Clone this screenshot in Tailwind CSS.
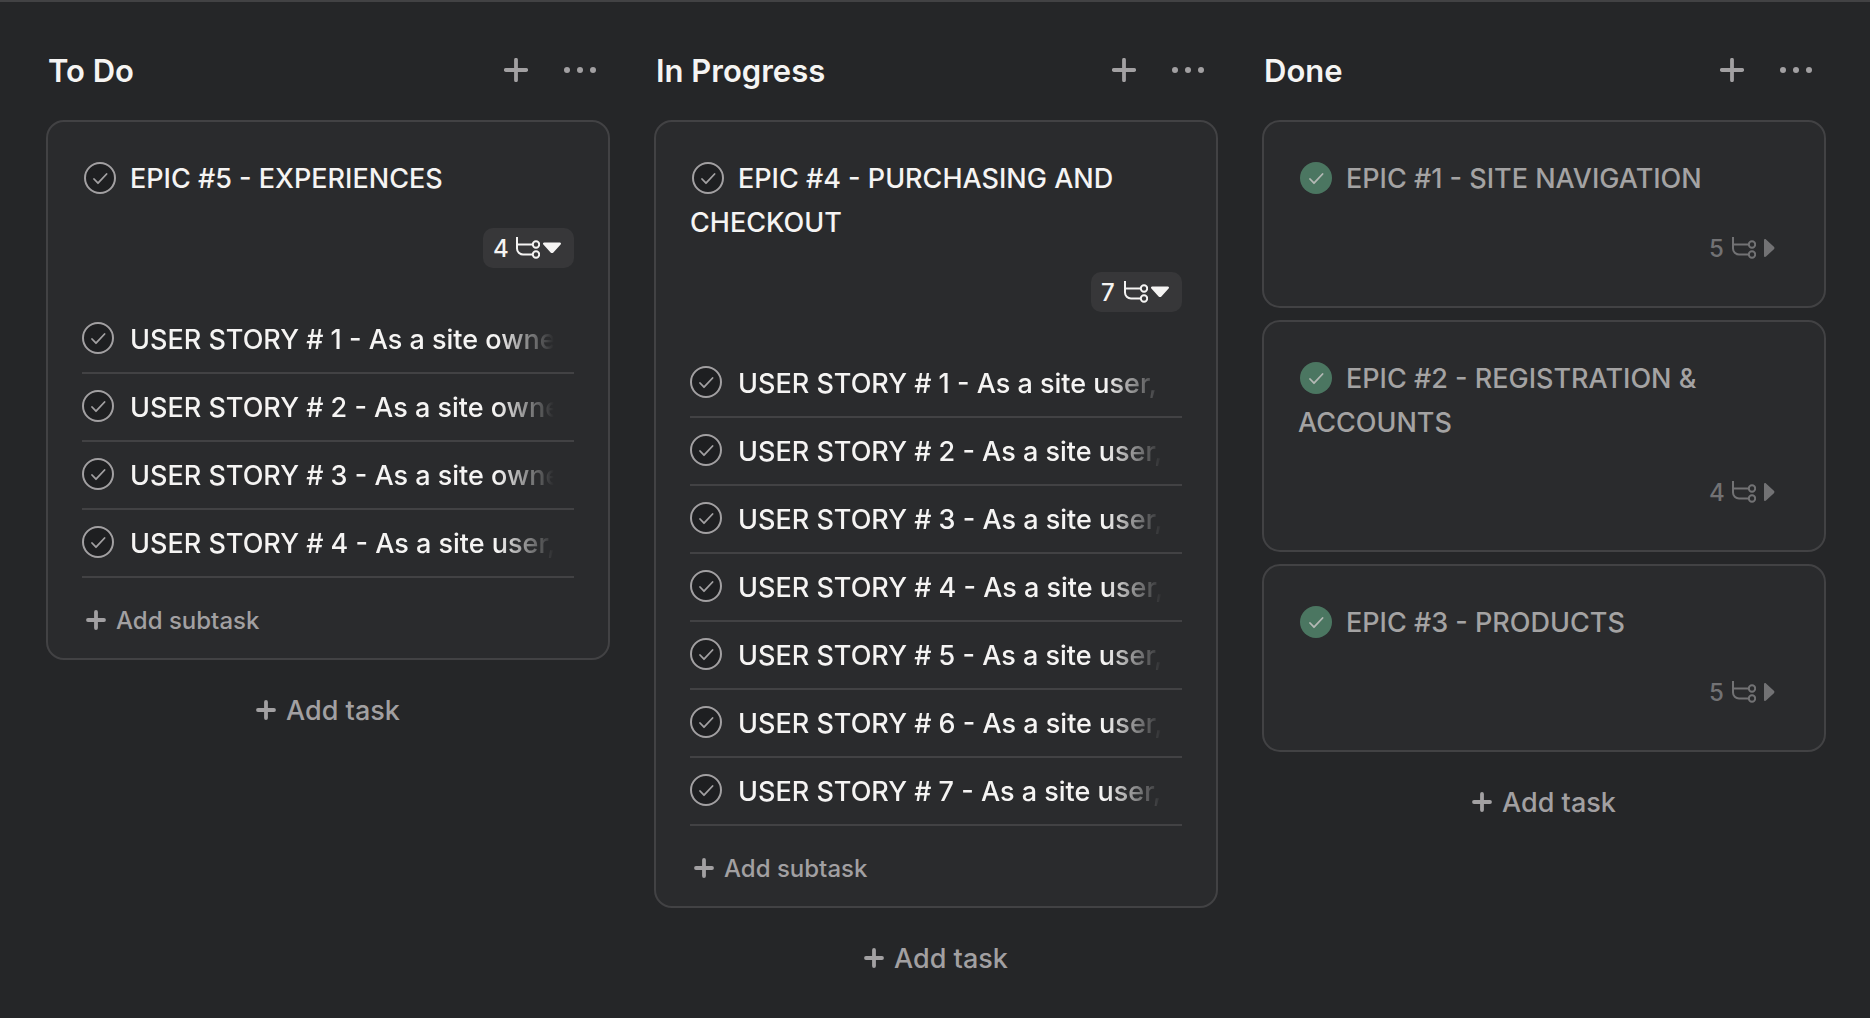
<!DOCTYPE html>
<html lang="en">
<head>
<meta charset="utf-8">
<meta name="viewport" content="width=device-width, initial-scale=1">
<title>Board</title>
<script src="https://cdn.jsdelivr.net/npm/@tailwindcss/browser@4"></script>
</head>
<body class="min-h-screen border-t-2 border-[#424244] bg-[#252628] font-['Inter',sans-serif] font-[450] text-[#f5f4f3]">
<svg class="hidden" aria-hidden="true">
  <symbol id="check" viewBox="0 0 32 32"><path d="M10 17l4 4.200 8.600-9.200" fill="none" stroke="currentColor" stroke-width="1.8" stroke-linecap="round" stroke-linejoin="round"/></symbol>
  <symbol id="plus" viewBox="0 0 24 24"><path d="M12 1.800v20.400M1.800 12h20.400" fill="none" stroke="currentColor" stroke-width="3.8" stroke-linecap="round"/></symbol>
  <symbol id="plus-bold" viewBox="0 0 20 20"><path d="M10 2v16M2 10h16" fill="none" stroke="currentColor" stroke-width="3.8" stroke-linecap="round"/></symbol>
  <symbol id="dots" viewBox="0 0 32 8"><circle cx="3" cy="4" r="3"/><circle cx="16" cy="4" r="3"/><circle cx="29" cy="4" r="3"/></symbol>
  <symbol id="branch" viewBox="0 0 24 22"><g fill="none" stroke="currentColor" stroke-width="2"><path d="M1 0v11.500a6 6 0 0 0 6 6H16.500M1 7.500H16.500"/><circle cx="20" cy="7.500" r="3.200"/><circle cx="20" cy="17.500" r="3.200"/></g></symbol>
  <symbol id="down" viewBox="0 0 20 20"><path d="M2.200 4.500h15.600c1.200 0 1.600 1.300.8 2.100l-7.200 7.800c-.8.800-2 .8-2.800 0L1.400 6.600C.6 5.800 1 4.500 2.200 4.500z"/></symbol>
  <symbol id="right" viewBox="0 0 20 20"><path d="M6 2.300v15.400c0 1.200 1.200 1.600 2 .8l7.900-7.300c.7-.7.7-1.700 0-2.400L8 1.500c-.8-.8-2-.4-2 .8z"/></symbol>
</svg>

<main class="grid grid-cols-3 gap-11 pr-11 pl-[46px]">

  <section>
    <header class="flex h-[118px] items-center pt-[18px] pr-3.5 pb-0 pl-0.5">
      <h2 class="flex-1 pt-0.5 text-[31px] leading-10 font-semibold">To Do</h2>
      <button class="mr-9 text-[#a2a0a2]" aria-label="Add task to To Do"><svg class="size-6"><use href="#plus"/></svg></button>
      <button class="text-[#a2a0a2]" aria-label="More actions"><svg class="h-2 w-8 fill-current"><use href="#dots"/></svg></button>
    </header>
    <article class="rounded-[18px] border-2 border-[#424244] bg-[#2a2b2d] px-[34px] pt-[35px]">
      <h3 class="text-[27px] leading-11"><label class="mt-[5px] mr-3.5 ml-0.5 inline-grid size-8 align-top text-[#a2a0a2]"><input type="checkbox" aria-label="Complete EPIC #5" class="col-start-1 row-start-1 size-8 appearance-none rounded-full border-2 border-[#a2a0a2] bg-[#1e1f21]"><svg class="pointer-events-none col-start-1 row-start-1 size-8"><use href="#check"/></svg></label>EPIC #5 - EXPERIENCES</h3>
      <div class="mt-[27px] mb-[38px] flex justify-end">
        <button class="flex h-10 w-[91px] items-center rounded-[10px] bg-[#373739] pl-2.5 text-2xl" aria-label="4 subtasks"><span class="w-[23px] pt-0.5 text-left">4</span><svg class="mr-0.5 h-[22px] w-6"><use href="#branch"/></svg><svg class="size-5 fill-current"><use href="#down"/></svg></button>
      </div>
      <ul class="text-[27px]">
        <li class="flex h-17 items-center gap-4 border-b-2 border-[#424244] pb-0.5"><label class="inline-grid size-8 shrink-0 text-[#a2a0a2]"><input type="checkbox" aria-label="Complete user story 1" class="col-start-1 row-start-1 size-8 appearance-none rounded-full border-2 border-[#a2a0a2] bg-[#1e1f21]"><svg class="pointer-events-none col-start-1 row-start-1 size-8"><use href="#check"/></svg></label><span class="mr-5 min-w-0 flex-1 overflow-hidden mask-r-from-[calc(100%-56px)] pt-1 whitespace-nowrap">USER STORY # 1 - As a site owner</span></li>
        <li class="flex h-17 items-center gap-4 border-b-2 border-[#424244] pb-0.5"><label class="inline-grid size-8 shrink-0 text-[#a2a0a2]"><input type="checkbox" aria-label="Complete user story 2" class="col-start-1 row-start-1 size-8 appearance-none rounded-full border-2 border-[#a2a0a2] bg-[#1e1f21]"><svg class="pointer-events-none col-start-1 row-start-1 size-8"><use href="#check"/></svg></label><span class="mr-5 min-w-0 flex-1 overflow-hidden mask-r-from-[calc(100%-56px)] pt-1 whitespace-nowrap">USER STORY # 2 - As a site owner</span></li>
        <li class="flex h-17 items-center gap-4 border-b-2 border-[#424244] pb-0.5"><label class="inline-grid size-8 shrink-0 text-[#a2a0a2]"><input type="checkbox" aria-label="Complete user story 3" class="col-start-1 row-start-1 size-8 appearance-none rounded-full border-2 border-[#a2a0a2] bg-[#1e1f21]"><svg class="pointer-events-none col-start-1 row-start-1 size-8"><use href="#check"/></svg></label><span class="mr-5 min-w-0 flex-1 overflow-hidden mask-r-from-[calc(100%-56px)] pt-1 whitespace-nowrap">USER STORY # 3 - As a site owner</span></li>
        <li class="flex h-17 items-center gap-4 border-b-2 border-[#424244] pb-0.5"><label class="inline-grid size-8 shrink-0 text-[#a2a0a2]"><input type="checkbox" aria-label="Complete user story 4" class="col-start-1 row-start-1 size-8 appearance-none rounded-full border-2 border-[#a2a0a2] bg-[#1e1f21]"><svg class="pointer-events-none col-start-1 row-start-1 size-8"><use href="#check"/></svg></label><span class="mr-5 min-w-0 flex-1 overflow-hidden mask-r-from-[calc(100%-56px)] pt-1 whitespace-nowrap">USER STORY # 4 - As a site user,</span></li>
      </ul>
      <button class="flex h-20 items-center gap-2.5 pt-1 pl-1 text-2xl font-[550] text-[#a2a0a2]"><svg class="size-5"><use href="#plus-bold"/></svg><span class="pt-0.5">Add subtask</span></button>
    </article>
    <button class="mt-5 flex h-15 w-full items-center justify-center gap-2.5 text-[27px] font-[550] text-[#a2a0a2]"><svg class="size-5"><use href="#plus-bold"/></svg><span class="pt-0.5">Add task</span></button>
  </section>

  <section>
    <header class="flex h-[118px] items-center pt-[18px] pr-3.5 pb-0 pl-0.5">
      <h2 class="flex-1 pt-0.5 text-[31px] leading-10 font-semibold">In Progress</h2>
      <button class="mr-9 text-[#a2a0a2]" aria-label="Add task to In Progress"><svg class="size-6"><use href="#plus"/></svg></button>
      <button class="text-[#a2a0a2]" aria-label="More actions"><svg class="h-2 w-8 fill-current"><use href="#dots"/></svg></button>
    </header>
    <article class="rounded-[18px] border-2 border-[#424244] bg-[#2a2b2d] px-[34px] pt-[35px]">
      <h3 class="text-[27px] leading-11"><label class="mt-[5px] mr-3.5 ml-0.5 inline-grid size-8 align-top text-[#a2a0a2]"><input type="checkbox" aria-label="Complete EPIC #4" class="col-start-1 row-start-1 size-8 appearance-none rounded-full border-2 border-[#a2a0a2] bg-[#1e1f21]"><svg class="pointer-events-none col-start-1 row-start-1 size-8"><use href="#check"/></svg></label>EPIC #4 - PURCHASING AND CHECKOUT</h3>
      <div class="mt-[27px] mb-[38px] flex justify-end">
        <button class="flex h-10 w-[91px] items-center rounded-[10px] bg-[#373739] pl-2.5 text-2xl" aria-label="7 subtasks"><span class="w-[23px] pt-0.5 text-left">7</span><svg class="mr-0.5 h-[22px] w-6"><use href="#branch"/></svg><svg class="size-5 fill-current"><use href="#down"/></svg></button>
      </div>
      <ul class="text-[27px]">
        <li class="flex h-17 items-center gap-4 border-b-2 border-[#424244] pb-0.5"><label class="inline-grid size-8 shrink-0 text-[#a2a0a2]"><input type="checkbox" aria-label="Complete user story 1" class="col-start-1 row-start-1 size-8 appearance-none rounded-full border-2 border-[#a2a0a2] bg-[#1e1f21]"><svg class="pointer-events-none col-start-1 row-start-1 size-8"><use href="#check"/></svg></label><span class="mr-5 min-w-0 flex-1 overflow-hidden mask-r-from-[calc(100%-56px)] pt-1 whitespace-nowrap">USER STORY # 1 - As a site user,</span></li>
        <li class="flex h-17 items-center gap-4 border-b-2 border-[#424244] pb-0.5"><label class="inline-grid size-8 shrink-0 text-[#a2a0a2]"><input type="checkbox" aria-label="Complete user story 2" class="col-start-1 row-start-1 size-8 appearance-none rounded-full border-2 border-[#a2a0a2] bg-[#1e1f21]"><svg class="pointer-events-none col-start-1 row-start-1 size-8"><use href="#check"/></svg></label><span class="mr-5 min-w-0 flex-1 overflow-hidden mask-r-from-[calc(100%-56px)] pt-1 whitespace-nowrap">USER STORY # 2 - As a site user,</span></li>
        <li class="flex h-17 items-center gap-4 border-b-2 border-[#424244] pb-0.5"><label class="inline-grid size-8 shrink-0 text-[#a2a0a2]"><input type="checkbox" aria-label="Complete user story 3" class="col-start-1 row-start-1 size-8 appearance-none rounded-full border-2 border-[#a2a0a2] bg-[#1e1f21]"><svg class="pointer-events-none col-start-1 row-start-1 size-8"><use href="#check"/></svg></label><span class="mr-5 min-w-0 flex-1 overflow-hidden mask-r-from-[calc(100%-56px)] pt-1 whitespace-nowrap">USER STORY # 3 - As a site user,</span></li>
        <li class="flex h-17 items-center gap-4 border-b-2 border-[#424244] pb-0.5"><label class="inline-grid size-8 shrink-0 text-[#a2a0a2]"><input type="checkbox" aria-label="Complete user story 4" class="col-start-1 row-start-1 size-8 appearance-none rounded-full border-2 border-[#a2a0a2] bg-[#1e1f21]"><svg class="pointer-events-none col-start-1 row-start-1 size-8"><use href="#check"/></svg></label><span class="mr-5 min-w-0 flex-1 overflow-hidden mask-r-from-[calc(100%-56px)] pt-1 whitespace-nowrap">USER STORY # 4 - As a site user,</span></li>
        <li class="flex h-17 items-center gap-4 border-b-2 border-[#424244] pb-0.5"><label class="inline-grid size-8 shrink-0 text-[#a2a0a2]"><input type="checkbox" aria-label="Complete user story 5" class="col-start-1 row-start-1 size-8 appearance-none rounded-full border-2 border-[#a2a0a2] bg-[#1e1f21]"><svg class="pointer-events-none col-start-1 row-start-1 size-8"><use href="#check"/></svg></label><span class="mr-5 min-w-0 flex-1 overflow-hidden mask-r-from-[calc(100%-56px)] pt-1 whitespace-nowrap">USER STORY # 5 - As a site user,</span></li>
        <li class="flex h-17 items-center gap-4 border-b-2 border-[#424244] pb-0.5"><label class="inline-grid size-8 shrink-0 text-[#a2a0a2]"><input type="checkbox" aria-label="Complete user story 6" class="col-start-1 row-start-1 size-8 appearance-none rounded-full border-2 border-[#a2a0a2] bg-[#1e1f21]"><svg class="pointer-events-none col-start-1 row-start-1 size-8"><use href="#check"/></svg></label><span class="mr-5 min-w-0 flex-1 overflow-hidden mask-r-from-[calc(100%-56px)] pt-1 whitespace-nowrap">USER STORY # 6 - As a site user,</span></li>
        <li class="flex h-17 items-center gap-4 border-b-2 border-[#424244] pb-0.5"><label class="inline-grid size-8 shrink-0 text-[#a2a0a2]"><input type="checkbox" aria-label="Complete user story 7" class="col-start-1 row-start-1 size-8 appearance-none rounded-full border-2 border-[#a2a0a2] bg-[#1e1f21]"><svg class="pointer-events-none col-start-1 row-start-1 size-8"><use href="#check"/></svg></label><span class="mr-5 min-w-0 flex-1 overflow-hidden mask-r-from-[calc(100%-56px)] pt-1 whitespace-nowrap">USER STORY # 7 - As a site user,</span></li>
      </ul>
      <button class="flex h-20 items-center gap-2.5 pt-1 pl-1 text-2xl font-[550] text-[#a2a0a2]"><svg class="size-5"><use href="#plus-bold"/></svg><span class="pt-0.5">Add subtask</span></button>
    </article>
    <button class="mt-5 flex h-15 w-full items-center justify-center gap-2.5 text-[27px] font-[550] text-[#a2a0a2]"><svg class="size-5"><use href="#plus-bold"/></svg><span class="pt-0.5">Add task</span></button>
  </section>

  <section>
    <header class="flex h-[118px] items-center pt-[18px] pr-3.5 pb-0 pl-0.5">
      <h2 class="flex-1 pt-0.5 text-[31px] leading-10 font-semibold">Done</h2>
      <button class="mr-9 text-[#a2a0a2]" aria-label="Add task to Done"><svg class="size-6"><use href="#plus"/></svg></button>
      <button class="text-[#a2a0a2]" aria-label="More actions"><svg class="h-2 w-8 fill-current"><use href="#dots"/></svg></button>
    </header>
    <div class="flex flex-col gap-3">
      <article class="rounded-[18px] border-2 border-[#424244] bg-[#2a2b2d] px-[34px] pt-[35px]">
        <h3 class="text-[27px] leading-11 text-[#a4a3a3]"><label class="mt-[5px] mr-3.5 ml-0.5 inline-grid size-8 align-top text-[#b4b9b5]"><input type="checkbox" checked aria-label="EPIC #1 completed" class="col-start-1 row-start-1 size-8 appearance-none rounded-full bg-[#4b7661]"><svg class="pointer-events-none col-start-1 row-start-1 size-8"><use href="#check"/></svg></label>EPIC #1 - SITE NAVIGATION</h3>
        <div class="mt-[27px] mb-[38px] flex justify-end">
          <button class="flex h-10 w-[91px] items-center pl-2.5 text-2xl text-[#727274]" aria-label="5 subtasks"><span class="w-[23px] pt-0.5 text-left">5</span><svg class="mr-0.5 h-[22px] w-6"><use href="#branch"/></svg><svg class="size-5 fill-current"><use href="#right"/></svg></button>
        </div>
      </article>
      <article class="rounded-[18px] border-2 border-[#424244] bg-[#2a2b2d] px-[34px] pt-[35px]">
        <h3 class="text-[27px] leading-11 text-[#a4a3a3]"><label class="mt-[5px] mr-3.5 ml-0.5 inline-grid size-8 align-top text-[#b4b9b5]"><input type="checkbox" checked aria-label="EPIC #2 completed" class="col-start-1 row-start-1 size-8 appearance-none rounded-full bg-[#4b7661]"><svg class="pointer-events-none col-start-1 row-start-1 size-8"><use href="#check"/></svg></label>EPIC #2 - REGISTRATION &amp; ACCOUNTS</h3>
        <div class="mt-[27px] mb-[38px] flex justify-end">
          <button class="flex h-10 w-[91px] items-center pl-2.5 text-2xl text-[#727274]" aria-label="4 subtasks"><span class="w-[23px] pt-0.5 text-left">4</span><svg class="mr-0.5 h-[22px] w-6"><use href="#branch"/></svg><svg class="size-5 fill-current"><use href="#right"/></svg></button>
        </div>
      </article>
      <article class="rounded-[18px] border-2 border-[#424244] bg-[#2a2b2d] px-[34px] pt-[35px]">
        <h3 class="text-[27px] leading-11 text-[#a4a3a3]"><label class="mt-[5px] mr-3.5 ml-0.5 inline-grid size-8 align-top text-[#b4b9b5]"><input type="checkbox" checked aria-label="EPIC #3 completed" class="col-start-1 row-start-1 size-8 appearance-none rounded-full bg-[#4b7661]"><svg class="pointer-events-none col-start-1 row-start-1 size-8"><use href="#check"/></svg></label>EPIC #3 - PRODUCTS</h3>
        <div class="mt-[27px] mb-[38px] flex justify-end">
          <button class="flex h-10 w-[91px] items-center pl-2.5 text-2xl text-[#727274]" aria-label="5 subtasks"><span class="w-[23px] pt-0.5 text-left">5</span><svg class="mr-0.5 h-[22px] w-6"><use href="#branch"/></svg><svg class="size-5 fill-current"><use href="#right"/></svg></button>
        </div>
      </article>
    </div>
    <button class="mt-5 flex h-15 w-full items-center justify-center gap-2.5 text-[27px] font-[550] text-[#a2a0a2]"><svg class="size-5"><use href="#plus-bold"/></svg><span class="pt-0.5">Add task</span></button>
  </section>
</main>
</body>
</html>
